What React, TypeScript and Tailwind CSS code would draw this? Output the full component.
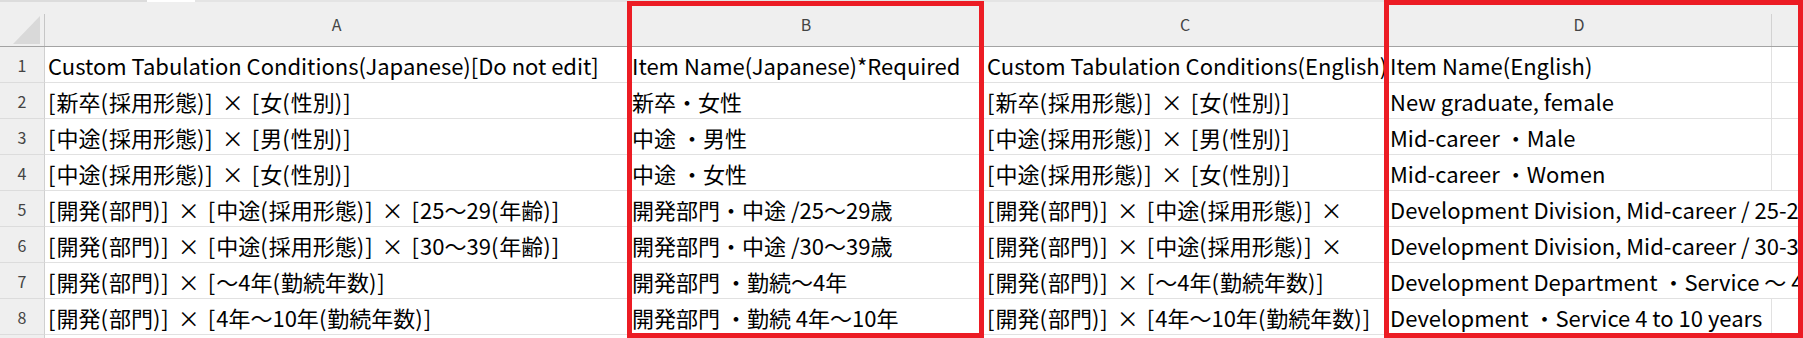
import React from "react";

type Cell = { t: string; overflow?: boolean };

const rows: Cell[][] = [
  [
    { t: "Custom Tabulation Conditions(Japanese)[Do not edit]" },
    { t: "Item Name(Japanese)*Required" },
    { t: "Custom Tabulation Conditions(English)" },
    { t: "Item Name(English)" },
  ],
  [
    { t: "[新卒(採用形態)] × [女(性別)]" },
    { t: "新卒・女性" },
    { t: "[新卒(採用形態)] × [女(性別)]" },
    { t: "New graduate, female" },
  ],
  [
    { t: "[中途(採用形態)] × [男(性別)]" },
    { t: "中途 ・男性" },
    { t: "[中途(採用形態)] × [男(性別)]" },
    { t: "Mid-career ・Male" },
  ],
  [
    { t: "[中途(採用形態)] × [女(性別)]" },
    { t: "中途 ・女性" },
    { t: "[中途(採用形態)] × [女(性別)]" },
    { t: "Mid-career ・Women" },
  ],
  [
    { t: "[開発(部門)] × [中途(採用形態)] × [25～29(年齢)]" },
    { t: "開発部門・中途 /25～29歳" },
    { t: "[開発(部門)] × [中途(採用形態)] ×" },
    { t: "Development Division, Mid-career / 25-29 years old", overflow: true },
  ],
  [
    { t: "[開発(部門)] × [中途(採用形態)] × [30～39(年齢)]" },
    { t: "開発部門・中途 /30～39歳" },
    { t: "[開発(部門)] × [中途(採用形態)] ×" },
    { t: "Development Division, Mid-career / 30-39 years old", overflow: true },
  ],
  [
    { t: "[開発(部門)] × [～4年(勤続年数)]" },
    { t: "開発部門 ・勤続～4年" },
    { t: "[開発(部門)] × [～4年(勤続年数)]" },
    { t: "Development Department ・Service ～ 4 years", overflow: true },
  ],
  [
    { t: "[開発(部門)] × [4年～10年(勤続年数)]" },
    { t: "開発部門 ・勤続 4年～10年" },
    { t: "[開発(部門)] × [4年～10年(勤続年数)]" },
    { t: "Development ・Service 4 to 10 years" },
  ],
];

const font = { fontFamily: '"Noto Sans CJK JP", sans-serif' };

function Txt({ t }: { t: string }) {
  if (!t.startsWith("[")) return <>{t}</>;
  const chars = Array.from(t);
  const out: React.ReactNode[] = [];
  let buf = "";
  const flush = () => {
    if (buf) {
      out.push(buf);
      buf = "";
    }
  };
  chars.forEach((ch, i) => {
    if (ch === "×") {
      flush();
      out.push(
        <span key={i} className="mx-[8px]">
          ×
        </span>
      );
    } else if ("[]()".includes(ch)) {
      flush();
      out.push(
        <span key={i} className="mr-[1px]">
          {ch}
        </span>
      );
    } else {
      buf += ch;
    }
  });
  flush();
  return <>{out}</>;
}

function HeaderCell({ label, last }: { label: string; last?: boolean }) {
  return (
    <div className="flex h-full border-b border-[#a3a3a3]">
      <div className="flex-1 flex items-center justify-center text-[16px] text-[#444]">{label}</div>
      {!last && <div className="w-px self-end h-[32px] bg-[#d2d2d2]" />}
    </div>
  );
}

export default function App() {
  return (
    <div
      className="relative w-[1803px] h-[338px] overflow-hidden bg-white"
      style={font}
    >
      <div className="flex h-[2px] bg-white">
        <div className="w-[147px] bg-[#dcdcdc]" />
        <div className="w-[48px]" />
        <div className="flex-1 bg-[#e4e4e4]" />
      </div>
      <div className="grid grid-cols-[45px_584px_355px_403px_385px_1fr] grid-rows-[45px_repeat(9,36px)] bg-white">
        <div className="flex h-full bg-[#efefef] border-b border-[#a3a3a3]">
          <div className="flex-1 flex items-end justify-end pb-[2px] pr-[3px]">
            <svg width="28" height="28" viewBox="0 0 28 28">
              <polygon points="27,0 27,28 0,28" fill="#d9d9d9" />
            </svg>
          </div>
          <div className="w-px self-end h-[32px] bg-[#c6c6c6]" />
        </div>
        <div className="bg-[#efefef]"><HeaderCell label="A" /></div>
        <div className="bg-[#efefef]"><HeaderCell label="B" /></div>
        <div className="bg-[#efefef]"><HeaderCell label="C" /></div>
        <div className="bg-[#efefef]"><HeaderCell label="D" /></div>
        <div className="bg-[#efefef]"><HeaderCell label="" last /></div>

        {rows.map((r, i) => (
          <React.Fragment key={i}>
            <div className="flex items-center justify-center bg-[#efefef] border-r border-b border-[#d0d0d0] border-b-[#dcdcdc] text-[16px] text-[#444]">
              {i + 1}
            </div>
            {r.map((c, j) => (
              <div
                key={j}
                className={
                  c.overflow
                    ? "flex items-center whitespace-nowrap border-b border-[#e1e1e1] pl-[3px] text-[22px] text-black leading-none z-10"
                    : "flex items-center whitespace-nowrap overflow-hidden border-r border-b border-[#e1e1e1] pl-[3px] text-[22px] text-black leading-none"
                }
              >
                <Txt t={c.t} />
              </div>
            ))}
            <div className="border-b border-[#e1e1e1]" />
          </React.Fragment>
        ))}
        <div className="bg-[#efefef] border-r border-[#d0d0d0]" />
        <div className="border-r border-[#e1e1e1]" />
        <div className="border-r border-[#e1e1e1]" />
        <div className="border-r border-[#e1e1e1]" />
        <div className="border-r border-[#e1e1e1]" />
        <div />
      </div>

      <div className="absolute left-[627px] top-[1px] w-[357px] h-[337px] border-[5px] border-[#ec1c24] pointer-events-none z-20" />
      <div className="absolute left-[1384px] top-0 w-[419px] h-[338px] border-[5px] border-[#ec1c24] pointer-events-none z-20" />
    </div>
  );
}
